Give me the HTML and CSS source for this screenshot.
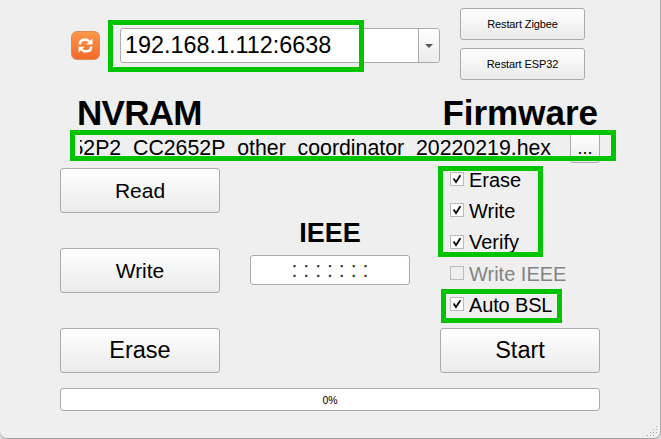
FILE: index.html
```html
<!DOCTYPE html>
<html lang="en">
<head>
<meta charset="utf-8">
<title>Firmware flasher</title>
<link rel="stylesheet" href="styles.css">
</head>
<body>
<main class="window">
  <header class="connection">
    <button class="refresh" aria-label="Refresh">
      <svg viewBox="0 0 16 16" width="15" height="15">
        <path d="M2 7V5.8Q2.4 2.2 6 1.8H9.5L12 3.4" fill="none" stroke="#fff" stroke-width="2.6"/>
        <path d="M15.4.6V6.8H8.8z" fill="#fff"/>
        <path d="M14 9v1.2Q13.6 13.8 10 14.2H6.5L4 12.6" fill="none" stroke="#fff" stroke-width="2.6"/>
        <path d="M.6 15.4V9.2H7.2z" fill="#fff"/>
      </svg>
    </button>
    <div class="combo"><span class="address">192.168.1.112:6638</span><span class="arrow"></span></div>
    <div class="restarts">
      <button class="btn small">Restart Zigbee</button>
      <button class="btn small">Restart ESP32</button>
    </div>
  </header>
  <div class="titles"><h1 class="nvram">NVRAM</h1><h1 class="firmware">Firmware</h1></div>
  <div class="file">
    <div class="filename"><span>52P2_CC2652P_other_coordinator_20220219.hex</span></div>
    <button class="btn browse">...</button>
  </div>
  <section class="panels">
    <div class="memory">
      <button class="btn">Read</button>
      <button class="btn">Write</button>
      <button class="btn large">Erase</button>
    </div>
    <div class="ieee">
      <h2>IEEE</h2>
      <div class="mask">: : : : : : :</div>
    </div>
    <div class="flash">
      <div class="options">
        <div class="option"><i class="box"><svg viewBox="0 0 12 12"><path d="M2.6 5.5L5 9.2L9.4 2.2"/></svg></i>Erase</div>
        <div class="option"><i class="box"><svg viewBox="0 0 12 12"><path d="M2.6 5.5L5 9.2L9.4 2.2"/></svg></i>Write</div>
        <div class="option"><i class="box"><svg viewBox="0 0 12 12"><path d="M2.6 5.5L5 9.2L9.4 2.2"/></svg></i>Verify</div>
        <div class="option disabled"><i class="box"></i>Write IEEE</div>
        <div class="option bsl"><i class="box"><svg viewBox="0 0 12 12"><path d="M2.6 5.5L5 9.2L9.4 2.2"/></svg></i>Auto BSL</div>
      </div>
      <button class="btn large">Start</button>
    </div>
  </section>
  <div class="progress">0%</div>
  <svg class="grip" width="11" height="11" viewBox="0 0 11 11"><path d="M9 0h1v1h-1zM6 3h1v1h-1zM9 3h1v1h-1zM3 6h1v1h-1zM6 6h1v1h-1zM9 6h1v1h-1zM0 9h1v1h-1zM3 9h1v1h-1zM6 9h1v1h-1z" fill="#aaa"/></svg>
  <div class="mark mark-address"></div>
  <div class="mark mark-file"></div>
  <div class="mark mark-options"></div>
  <div class="mark mark-bsl"></div>
</main>
</body>
</html>
```
FILE: styles.css
```css
* { box-sizing: border-box; }
body {
  margin: 0;
  background: linear-gradient(#3c3c3c 49px, #dcdcdc 49px);
  font-family: "Liberation Sans", Arial, sans-serif;
  color: #000;
}
.window {
  position: relative;
  width: 661px;
  height: 439px;
  padding: 8px 60px 0;
  background: #efefef linear-gradient(#3c3c3c, #3c3c3c) right top / 1px 49px no-repeat border-box;
  border-bottom: 1px solid #a0a0a0;
  border-right: 1px solid #aaa;
  border-radius: 0 0 7px 7px;
  overflow: hidden;
}
button { font-family: inherit; color: inherit; padding: 0; }
h1, h2 { margin: 0; white-space: nowrap; }
.btn {
  display: block;
  width: 160px;
  height: 45px;
  border: 1px solid #ababab;
  border-radius: 3px;
  background: linear-gradient(#fff, #ebebeb);
  font-size: 21px;
}
.large { font-size: 23.5px; }
.small { width: 125px; height: 32px; font-size: 11px; letter-spacing: -0.1px; }
.connection { display: flex; height: 72px; width: 525px; }
.refresh {
  width: 29px;
  height: 29px;
  margin: 23px 20px 0 11px;
  border: 1px solid #df8a58;
  border-radius: 6px;
  background: linear-gradient(#fc964c, #f36a26);
  display: flex;
  align-items: center;
  justify-content: center;
}
.combo {
  display: flex;
  width: 320px;
  height: 35px;
  margin: 20px 20px 0 0;
  border: 1px solid #ababab;
  border-radius: 3px;
  background: #fff;
  overflow: hidden;
}
.address { flex: 1; padding-left: 4px; font-size: 23.4px; line-height: 32px; }
.arrow {
  width: 21px;
  border-left: 1px solid #ababab;
  background: linear-gradient(#fff, #ebebeb);
  display: flex;
  align-items: center;
  justify-content: center;
}
.arrow::before {
  content: "";
  border: 4px solid transparent;
  border-top-color: #555;
  border-bottom: 0;
}
.restarts { display: grid; gap: 8px; }
.titles {
  display: flex;
  justify-content: space-between;
  height: 53px;
  padding: 14px 2px 0 17px;
}
.titles h1 { font-size: 35px; line-height: 38px; }
.nvram { letter-spacing: -0.7px; }
.file { display: flex; justify-content: space-between; height: 35px; padding-left: 20px; }
.filename {
  width: 471px;
  height: 30px;
  display: flex;
  justify-content: flex-end;
  overflow: hidden;
  font-size: 21.3px;
  line-height: 31px;
  white-space: nowrap;
}
.browse { width: 30px; height: 30px; font-size: 18px; }
.panels { display: flex; gap: 30px; height: 205px; }
.memory { display: grid; align-content: space-between; }
.ieee { width: 160px; padding-top: 49px; text-align: center; }
.ieee h2 { font-size: 27px; line-height: 32px; height: 38px; }
.mask {
  height: 30px;
  border: 1px solid #ababab;
  border-radius: 3px;
  background: #fff;
  color: #333;
  font-size: 21.3px;
  line-height: 28px;
}
.flash { display: flex; flex-direction: column; justify-content: space-between; }
.options { padding: 0 0 0 10px; display: grid; grid-auto-rows: 31.3px; margin-top: -4px; }
.option { display: flex; align-items: center; gap: 5px; font-size: 20px; line-height: 30px; white-space: nowrap; }
.box { width: 14px; height: 14px; border: 1px solid #bbb; background: #fff; display: flex; margin-top: -1px; }
.box svg { width: 12px; height: 12px; fill: none; stroke: #000; stroke-width: 1.8; }
.bsl { letter-spacing: -0.15px; }
.disabled { color: #838383; }
.disabled .box { background: #efefef; }
.progress {
  height: 23px;
  margin-top: 15px;
  border: 1px solid #ababab;
  border-radius: 3px;
  background: #fff;
  text-align: center;
  font-size: 10.5px;
  line-height: 22px;
}
.grip { position: absolute; right: 2px; bottom: 1px; }
.mark { position: absolute; border: 5px solid #00c400; }
.mark-address { left: 108px; top: 20px; width: 256px; height: 52px; }
.mark-file { left: 70px; top: 130px; width: 546px; height: 31px; }
.mark-options { left: 438px; top: 166px; width: 105px; height: 91px; }
.mark-bsl { left: 441px; top: 289px; width: 121px; height: 34px; }
```
